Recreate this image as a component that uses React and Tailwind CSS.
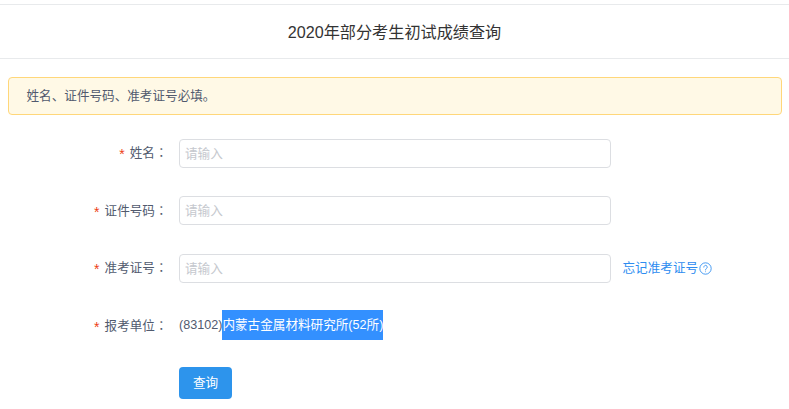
function Field({ label, children, extra }) {
  return (
    <div className="flex items-center h-[28.5px]">
      <label className="w-[167.5px] shrink-0 text-right text-[12.6px] text-[#515a6e] leading-[16px]">
        <span className="text-[#ed4014] text-[14px] mr-[5px] align-[-2px]">*</span>{label}
        <span className="font-['Noto_Sans_CJK_TC',sans-serif]">：</span>
      </label>
      <div className="ml-[11.5px] flex items-center">{children}</div>
      {extra}
    </div>
  );
}
function Input() {
  return (
    <input
      placeholder="请输入"
      readOnly
      className="w-[432px] h-[29px] rounded-[4px] border border-[#dcdee2] pl-[5px] pr-[6px] pt-[1px] text-[12.6px] bg-white outline-none placeholder:text-[#c5c8ce]"
    />
  );
}
export default function App() {
  return (
    <div className="w-[789px] h-[409px] overflow-hidden bg-white font-['Liberation_Sans','Noto_Sans_CJK_SC',sans-serif] pt-[4px]">
      <div className="h-[55px] border-y border-[#e8eaec] flex items-center justify-center pt-[2px] text-[16.15px] text-[#333]">
        2020年部分考生初试成绩查询
      </div>
      <div className="ml-[8px] mr-[7.5px] mt-[18px] h-[38px] rounded-[4px] border border-[#ffd77a] bg-[#fff9e6] flex items-center pl-[17.5px] pt-[1px] text-[12.6px] text-[#515a6e]">
        姓名、证件号码、准考证号必填。
      </div>
      <div className="mt-[24px] flex flex-col gap-[29px]">
        <Field label="姓名"><Input /></Field>
        <Field label="证件号码"><Input /></Field>
        <Field label="准考证号"
          extra={
            <a className="ml-[11.5px] flex items-center pt-[1px] text-[12.6px] text-[#2d8cf0]">
              忘记准考证号
              <svg width="13" height="13" viewBox="0 0 24 24" fill="none" stroke="#2d8cf0" strokeWidth="1.6" className="ml-[0.5px]">
                <circle cx="12" cy="12" r="10.5" />
                <path d="M8.8 9.4a3.2 3.2 0 1 1 4.9 2.7c-1.1.7-1.7 1.3-1.7 2.6" strokeLinecap="round" />
                <circle cx="12" cy="17.8" r="0.9" fill="#2d8cf0" stroke="none" />
              </svg>
            </a>
          }
        ><Input /></Field>
        <Field label="报考单位">
          <span className="text-[12.6px] text-[#515a6e]">(83102)</span>
          <span className="h-[30px] mb-[2px] flex items-center bg-[#3390ff] pt-[1px] text-white text-[12.6px]">内蒙古金属材料研究所(52所)</span>
        </Field>
      </div>
      <button className="ml-[179px] mt-[27px] w-[53px] h-[32px] rounded-[4px] bg-[#2d94ec] text-white text-[12.6px] pt-[1px] block">查询</button>
    </div>
  );
}
